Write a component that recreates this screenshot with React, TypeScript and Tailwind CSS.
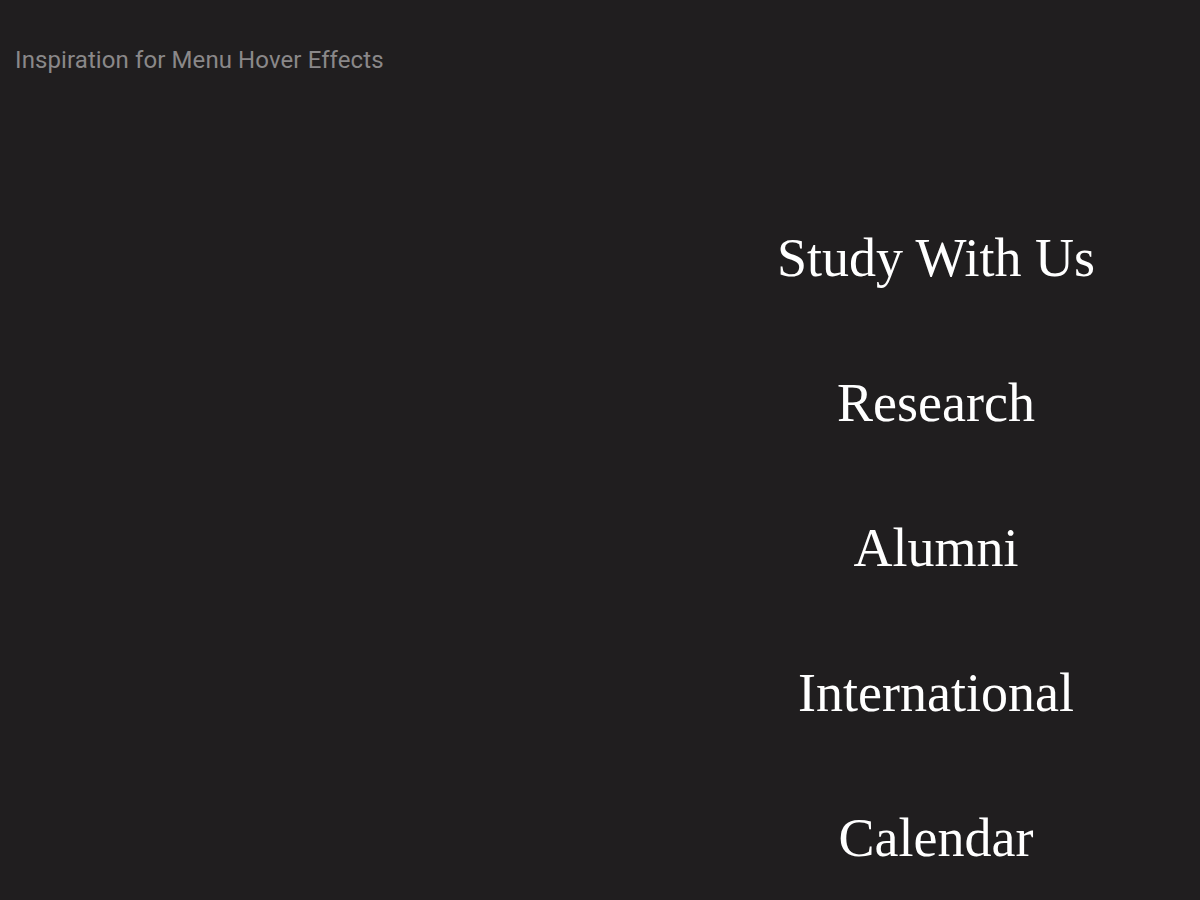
const items = ['Study With Us', 'Research', 'Alumni', 'International', 'Calendar']

function App() {
  return (
    <div className="min-h-screen w-full bg-[#201e1f] overflow-hidden">
      <header className="px-[15px] pt-[44px]">
        <h1 className="text-[24px] tracking-[0.1px] leading-[32px] text-[#8a8889] font-['Roboto',sans-serif]">
          Inspiration for Menu Hover Effects
        </h1>
      </header>
      <nav className="ml-auto w-[528px] pt-[110px] flex flex-col items-center">
        {items.map((item) => (
          <a
            key={item}
            href="#"
            className="block text-[54px] leading-[145px] text-white font-['Liberation_Serif',serif]"
          >
            {item}
          </a>
        ))}
      </nav>
    </div>
  )
}

export default App
